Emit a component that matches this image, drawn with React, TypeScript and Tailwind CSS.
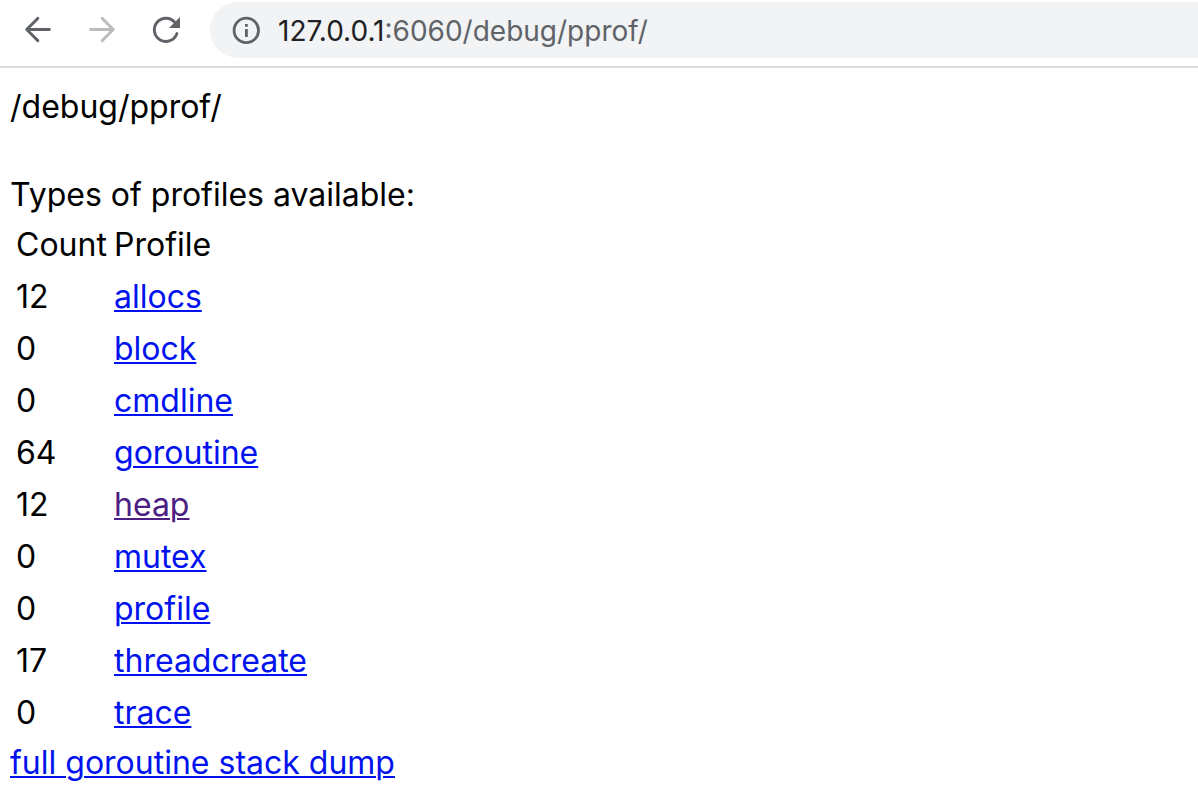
const profiles = [
  { name: 'allocs', count: 12 },
  { name: 'block', count: 0 },
  { name: 'cmdline', count: 0 },
  { name: 'goroutine', count: 64 },
  { name: 'heap', count: 12, visited: true },
  { name: 'mutex', count: 0 },
  { name: 'profile', count: 0 },
  { name: 'threadcreate', count: 17 },
  { name: 'trace', count: 0 },
];

const linkClass = 'underline decoration-2 underline-offset-2';

function Toolbar() {
  return (
    <header className="flex h-[68px] items-start border-b-2 border-[#dadce0] pt-0.5 font-[Inter,sans-serif]">
      <nav className="flex h-14 w-[210px] shrink-0 items-center gap-8 pl-[22px]">
        <button type="button" aria-label="Back" className="text-[#5f6368]">
          <svg viewBox="0 0 32 32" className="size-8" fill="none" stroke="currentColor" strokeWidth="2.9" strokeLinecap="round" strokeLinejoin="round">
            <path d="M27.4 15.5H5M15.8 4.4L4.7 15.5L15.8 26.6" />
          </svg>
        </button>
        <button type="button" aria-label="Forward" className="text-[#babcbe]">
          <svg viewBox="0 0 32 32" className="size-8" fill="none" stroke="currentColor" strokeWidth="2.9" strokeLinecap="round" strokeLinejoin="round">
            <path d="M4.6 15.5H27M16.2 4.4L27.3 15.5L16.2 26.6" />
          </svg>
        </button>
        <button type="button" aria-label="Reload" className="text-[#5f6368]">
          <svg viewBox="0 0 32 32" className="size-8" fill="none" stroke="currentColor" strokeWidth="2.9">
            <path d="M25 8.6A11.6 11.6 0 1 0 26.9 19.6" strokeLinecap="round" />
            <path d="M30 3v11H19z" fill="currentColor" stroke="none" />
          </svg>
        </button>
      </nav>
      <div className="flex h-14 min-w-0 flex-1 items-center rounded-l-full bg-[#f1f3f4] pl-[22px]">
        <svg viewBox="0 0 28 28" className="size-7 shrink-0 text-[#5f6368]" fill="none" stroke="currentColor" strokeWidth="2.8">
          <circle cx="14.3" cy="14.4" r="12.2" />
          <path d="M14.4 13V21M14.4 8v2.8" />
        </svg>
        <div className="ml-[18px] pt-0.5 text-[28px] leading-8 text-[#5f6368]">
          <span className="text-[#202124]">127.0.0.1</span>:6060/debug/pprof/
        </div>
      </div>
    </header>
  );
}

export default function App() {
  return (
    <div className="min-h-screen bg-white text-black">
      <Toolbar />
      <main className="px-2.5 pt-[17px] font-[Inter,sans-serif] text-[32px] leading-[44px]">
        <h1>/debug/pprof/</h1>
        <p className="mt-11">Types of profiles available:</p>
        <table className="my-0.5 ml-1">
          <thead>
            <tr className="h-[52px] text-left">
              <th className="w-[98px] p-0 pl-0.5 font-normal">Count</th>
              <th className="p-0 pl-0.5 font-normal">Profile</th>
            </tr>
          </thead>
          <tbody>
            {profiles.map((profile) => (
              <tr key={profile.name} className="h-[52px]">
                <td className="p-0 pl-0.5">{profile.count}</td>
                <td className="p-0 pl-0.5">
                  <a href="#" className={`${linkClass} ${profile.visited ? 'text-[#4b2082]' : 'text-[#0012ee]'}`}>
                    {profile.name}
                  </a>
                </td>
              </tr>
            ))}
          </tbody>
        </table>
        <a href="#" className={`${linkClass} text-[#0012ee]`}>
          full goroutine stack dump
        </a>
      </main>
    </div>
  );
}
